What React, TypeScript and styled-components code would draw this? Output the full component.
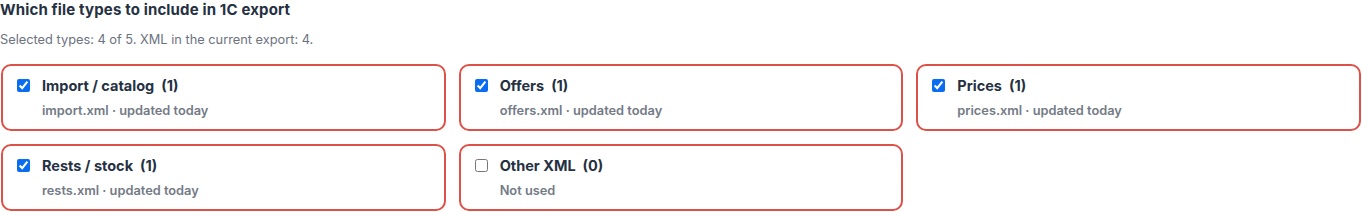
import React from "react";
import styled, { createGlobalStyle } from "styled-components";

const Global = createGlobalStyle`
  html, body { margin: 0; padding: 0; background: #ffffff; }
  body { font-family: Inter, "Noto Sans", "Liberation Sans", sans-serif; color: #1f2937; }
`;

const Wrap = styled.section`
  padding: 0 1px;
  display: flex;
  flex-direction: column;
`;

const Heading = styled.h2`
  margin: 0 0 0 -1px;
  padding-top: 1px;
  font-size: 15px;
  line-height: 18px;
  letter-spacing: 0.15px;
  font-weight: 700;
  color: #253142;
`;

const Sub = styled.p`
  margin: 13px 0 0 -1px;
  font-size: 12.8px;
  line-height: 16px;
  color: #6b7280;
`;

const Grid = styled.div`
  margin-top: 16px;
  display: grid;
  grid-template-columns: repeat(3, 1fr);
  column-gap: 13px;
  row-gap: 13px;
`;

const Card = styled.label`
  box-sizing: border-box;
  height: 67px;
  border: 2px solid #dc5148;
  border-radius: 10px;
  padding: 11px 14px;
  display: flex;
  align-items: flex-start;
  gap: 12px;
  cursor: pointer;
`;

const Check = styled.input`
  margin: 2px 0 0 0;
  width: 13px;
  height: 13px;
  accent-color: #0a6cf0;
  flex: none;
`;

const Body = styled.div`
  display: flex;
  flex-direction: column;
  gap: 8px;
`;

const Title = styled.div`
  font-size: 14.5px;
  line-height: 18px;
  font-weight: 700;
  color: #253142;
`;

const Count = styled.span`
  margin-left: 7px;
`;

const Meta = styled.div`
  font-size: 12.8px;
  line-height: 16px;
  font-weight: 600;
  color: #737a86;
`;

const items = [
  { name: "Import / catalog", count: 1, meta: "import.xml · updated today", checked: true },
  { name: "Offers", count: 1, meta: "offers.xml · updated today", checked: true },
  { name: "Prices", count: 1, meta: "prices.xml · updated today", checked: true },
  { name: "Rests / stock", count: 1, meta: "rests.xml · updated today", checked: true },
  { name: "Other XML", count: 0, meta: "Not used", checked: false },
];

export default function App() {
  return (
    <>
      <Global />
      <Wrap>
        <Heading>Which file types to include in 1C export</Heading>
        <Sub>Selected types: 4 of 5. XML in the current export: 4.</Sub>
        <Grid>
          {items.map((it) => (
            <Card key={it.name}>
              <Check type="checkbox" defaultChecked={it.checked} />
              <Body>
                <Title>
                  {it.name}
                  <Count>({it.count})</Count>
                </Title>
                <Meta>{it.meta}</Meta>
              </Body>
            </Card>
          ))}
        </Grid>
      </Wrap>
    </>
  );
}
